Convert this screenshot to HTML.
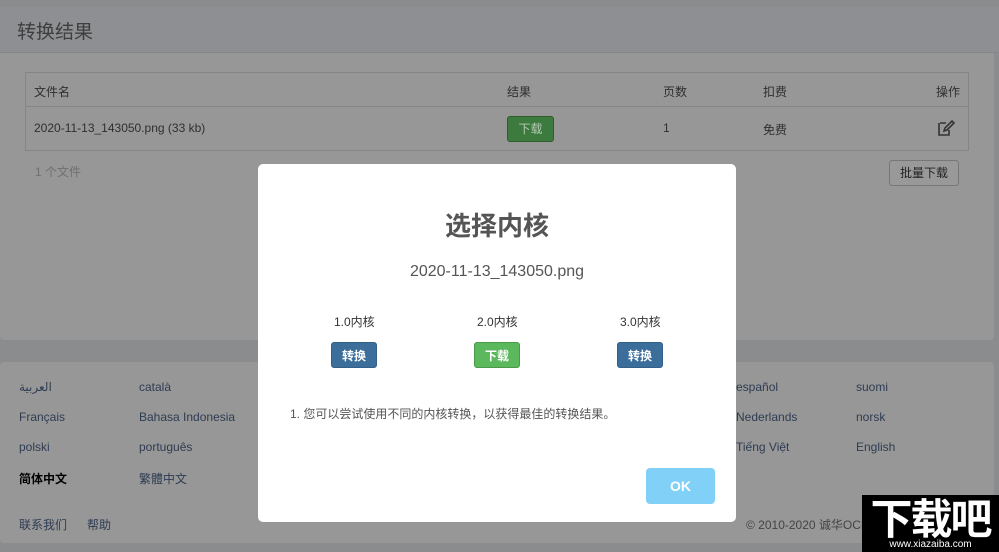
<!DOCTYPE html>
<html><head><meta charset="utf-8"><style>
*{margin:0;padding:0;box-sizing:border-box}
body{width:999px;height:552px;overflow:hidden;background:#8b8c8e;font-family:"Liberation Sans","Noto Sans CJK SC",sans-serif;position:relative;font-size:12px;color:#333}
.abs{position:absolute}
.hdr{left:0;top:7px;width:999px;height:46px;background:#8e8f92;border-bottom:1px solid #85868a}
.hdr span{position:absolute;left:17px;top:10px;font-size:19px;color:#3e3e3e}
.main{left:0;top:53px;width:994px;height:287px;background:#979797;border-radius:0 0 4px 4px}
.tbl{left:25px;top:72px;width:944px;height:79px;border:1px solid #858585}
.tbl .line{position:absolute;left:0;top:33px;width:100%;height:1px;background:#858585}
.t{position:absolute;font-size:12px;color:#2f2f2f;white-space:nowrap}
.foot{left:0;top:362px;width:994px;height:181px;background:#979797;border-radius:4px}
.lk{position:absolute;font-size:12px;color:#2e3c52;white-space:nowrap}
.modal{left:258px;top:164px;width:478px;height:358px;background:#fff;border-radius:5px}
.btn{position:absolute;width:46px;height:26px;border-radius:3px;color:#fff;font-size:12px;font-weight:bold;text-align:center;line-height:26px}
.blue{background:#3c6e9b;border:1px solid #345f88}
.green{background:#5cb85c;border:1px solid #4a9a4a}
</style></head><body>
<div class="abs hdr"><span>转换结果</span></div>
<div class="abs main"></div>
<div class="abs tbl"><div class="line"></div>
<div class="t" style="left:8px;top:10px">文件名</div>
<div class="t" style="left:481px;top:10px">结果</div>
<div class="t" style="left:637px;top:10px">页数</div>
<div class="t" style="left:737px;top:10px">扣费</div>
<div class="t" style="left:910px;top:10px">操作</div>
<div class="t" style="left:8px;top:48px">2020-11-13_143050.png (33 kb)</div>
<div style="position:absolute;left:481px;top:43px;width:47px;height:26px;background:#3d7a3d;border:1px solid #2e5e2e;border-radius:3px;color:#b5c9b5;text-align:center;line-height:24px;font-size:12px">下载</div>
<div class="t" style="left:637px;top:48px">1</div>
<div class="t" style="left:737px;top:48px">免费</div>
<svg style="position:absolute;left:910px;top:45px" width="20" height="20" viewBox="0 0 20 20"><path d="M4 5h6M3 5v12h10v-5" fill="none" stroke="#333" stroke-width="1.6"/><path d="M8 13l1-3 7-7 2 2-7 7z" fill="none" stroke="#333" stroke-width="1.6"/></svg>
</div>
<div class="t abs" style="left:35px;top:163px;color:#707070">1 个文件</div>
<div class="abs" style="left:889px;top:160px;width:70px;height:26px;border:1px solid #777;border-radius:3px;background:#999;font-size:12px;text-align:center;line-height:24px;color:#222">批量下载</div>
<div class="abs foot"></div>
<div class="lk" style="left:19px;top:380px">العربية</div>
<div class="lk" style="left:139px;top:380px">català</div>
<div class="lk" style="left:736px;top:380px">español</div>
<div class="lk" style="left:856px;top:380px">suomi</div>
<div class="lk" style="left:19px;top:410px">Français</div>
<div class="lk" style="left:139px;top:410px">Bahasa Indonesia</div>
<div class="lk" style="left:736px;top:410px">Nederlands</div>
<div class="lk" style="left:856px;top:410px">norsk</div>
<div class="lk" style="left:19px;top:440px">polski</div>
<div class="lk" style="left:139px;top:440px">português</div>
<div class="lk" style="left:736px;top:440px">Tiếng Việt</div>
<div class="lk" style="left:856px;top:440px">English</div>
<div class="lk" style="left:19px;top:470px;color:#000;font-weight:bold">简体中文</div>
<div class="lk" style="left:139px;top:470px">繁體中文</div>
<div class="lk" style="left:19px;top:516px">联系我们</div>
<div class="lk" style="left:87px;top:516px">帮助</div>
<div class="lk" style="left:746px;top:516px;color:#444">© 2010-2020 诚华OCR</div>
<div class="abs modal">
<div style="position:absolute;left:0;width:478px;top:42px;text-align:center;font-size:26px;font-weight:bold;color:#555">选择内核</div>
<div style="position:absolute;left:0;width:478px;top:99px;text-align:center;font-size:16px;color:#555">2020-11-13_143050.png</div>
<div class="t" style="left:76px;top:149px;color:#333">1.0内核</div>
<div class="t" style="left:219px;top:149px;color:#333">2.0内核</div>
<div class="t" style="left:362px;top:149px;color:#333">3.0内核</div>
<div class="btn blue" style="left:73px;top:178px">转换</div>
<div class="btn green" style="left:216px;top:178px">下载</div>
<div class="btn blue" style="left:359px;top:178px">转换</div>
<div class="t" style="left:32px;top:241px;color:#555">1. 您可以尝试使用不同的内核转换，以获得最佳的转换结果。</div>
<div style="position:absolute;left:388px;top:304px;width:69px;height:36px;background:#80d0f8;border-radius:4px;color:#fff;font-weight:bold;font-size:14px;text-align:center;line-height:36px">OK</div>
</div>
<div class="abs" style="left:862px;top:495px;width:137px;height:57px;background:#000">
<div style="position:absolute;left:0;right:0;top:-2px;text-align:center;color:#fff;font-size:42px;font-weight:bold;letter-spacing:-2px;font-family:'Noto Sans CJK SC',sans-serif;line-height:48px">下载吧</div>
<div style="position:absolute;left:0;right:0;top:44px;text-align:center;color:#fff;font-size:10px">www.xiazaiba.com</div>
</div>
</body></html>
